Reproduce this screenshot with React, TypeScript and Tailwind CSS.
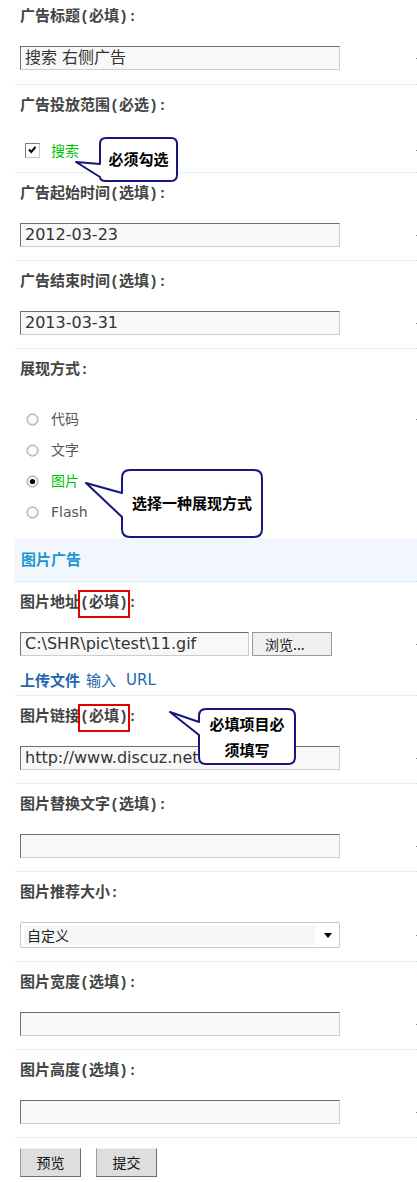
import React from "react";

const LABEL_FONT = "[font-family:'Liberation_Mono','Noto_Sans_CJK_SC',monospace]";
const CJK = "[font-family:'Noto_Sans_CJK_SC',sans-serif]";
const VERD = "[font-family:'DejaVu_Sans','Noto_Sans_CJK_SC',sans-serif]";

function Dot() {
  return <span className="block h-[1px] w-[1px] bg-[#8a8a8a]" />;
}

function Label({ children }: { children: React.ReactNode }) {
  return (
    <div className={`flex h-[20px] items-center text-[15px] font-bold text-[#444] ${LABEL_FONT}`}>{children}</div>
  );
}

function Req({ children }: { children: React.ReactNode }) {
  return (
    <span className="inline-flex h-[24px] items-center outline-2 outline-solid outline-[#e00000]">{children}</span>
  );
}

function TextBox({ value, w = "w-[320px]" }: { value?: string; w?: string }) {
  return (
    <div
      className={`flex h-[24px] ${w} items-center overflow-hidden border border-t-[#6e6e6e] border-l-[#6e6e6e] border-r-[#cdcdcd] border-b-[#cdcdcd] bg-[#f8f8f8] pl-[4px] text-[16px] whitespace-nowrap text-[#333] ${VERD}`}
    >
      {value}
    </div>
  );
}

function Row({
  label,
  children,
  pt = "pt-[12px]",
  pb = "pb-[13px]",
  mt = "mt-[18px]",
}: {
  label: React.ReactNode;
  children: React.ReactNode;
  pt?: string;
  pb?: string;
  mt?: string;
}) {
  return (
    <div className={`border-b border-dotted border-[#c6e3f6] pl-[6px] ${pt} ${pb}`}>
      <Label>{label}</Label>
      <div className={mt}>{children}</div>
    </div>
  );
}

function Radio({ checked }: { checked?: boolean }) {
  return (
    <svg width="13" height="13" viewBox="0 0 13 13">
      <circle cx="6.5" cy="6.5" r="5.5" fill="#fbfbfb" stroke="#8e8e8e" />
      <circle cx="6.5" cy="6.5" r="4.5" fill="none" stroke="#e2e2e2" />
      {checked && <circle cx="6.5" cy="6.5" r="2.6" fill="#000" />}
    </svg>
  );
}

function RadioRow({ label, checked, green, dot }: { label: string; checked?: boolean; green?: boolean; dot?: boolean }) {
  return (
    <div className="flex h-[31px] items-center justify-between">
      <div className="flex items-center">
        <span className="ml-[6px] flex">
          <Radio checked={checked} />
        </span>
        <span className={`ml-[12px] text-[14px] ${green ? "text-[#00c400]" : "text-[#555]"} ${VERD}`}>{label}</span>
      </div>
      {dot && <Dot />}
    </div>
  );
}

export default function App() {
  return (
    <div className="relative w-[417px] bg-white pl-[14px]">
      {/* Row 1 */}
      <Row label={<>广告标题(必填):</>} pt="pt-[8px]" pb="pb-[14px]">
        <div className="flex items-center justify-between">
          <TextBox value="搜索 右侧广告" />
          <Dot />
        </div>
      </Row>

      {/* Row 2 */}
      <Row label={<>广告投放范围(必选):</>} mt="mt-[21px]" pb="pb-[10px]">
        <div className="flex h-[24px] items-center justify-between">
          <div className="flex items-center">
            <svg width="15" height="15" viewBox="0 0 15 15" className="ml-[5px]">
              <rect x="0.5" y="0.5" width="14" height="14" fill="#fff" stroke="#c8c8c8" />
              <path d="M0.5 14.5 V0.5 H14.5" fill="none" stroke="#7a7a7a" />
              <path d="M4 6.5 L6.3 9 L10.5 3.8" fill="none" stroke="#000" strokeWidth="2" />
            </svg>
            <span className={`ml-[11px] text-[14px] text-[#00c400] ${CJK}`}>搜索</span>
          </div>
          <Dot />
        </div>
      </Row>

      {/* Row 3 */}
      <Row label={<>广告起始时间(选填):</>}>
        <div className="flex items-center justify-between">
          <TextBox value="2012-03-23" />
          <Dot />
        </div>
      </Row>

      {/* Row 4 */}
      <Row label={<>广告结束时间(选填):</>}>
        <div className="flex items-center justify-between">
          <TextBox value="2013-03-31" />
          <Dot />
        </div>
      </Row>

      {/* Row 5 */}
      <div className="pl-[6px] pt-[12px] pb-[10px]">
        <Label>展现方式:</Label>
        <div className="mt-[23px]">
          <RadioRow label="代码" dot />
          <RadioRow label="文字" />
          <RadioRow label="图片" checked green />
          <RadioRow label="Flash" />
        </div>
      </div>

      {/* Section header */}
      <div className="flex h-[44px] items-center border-b border-dotted border-[#c6e3f6] bg-[#f1f7fc] pl-[7px]">
        <span className={`text-[15px] font-bold text-[#1c97d2] ${CJK}`}>图片广告</span>
      </div>

      {/* Row 6 */}
      <Row
        label={
          <>
            图片地址<Req>(必填)</Req>:
          </>
        }
        pb="pb-[5px]"
      >
        <div className="flex items-center justify-between">
          <div className="flex items-center gap-[3px]">
            <TextBox value="C:\SHR\pic\test\11.gif" w="w-[229px]" />
            <div
              className={`flex h-[24px] w-[80px] items-center border border-[#9a9a9a] bg-[#f0f0f0] pl-[12px] text-[14px] text-[#222] ${CJK}`}
            >
              浏览...
            </div>
          </div>
          <Dot />
        </div>
        <div className="mt-[14px] flex h-[20px] items-center text-[15px] text-[#2466ad]">
          <span className={`font-bold ${CJK}`}>上传文件</span>
          <span className={`ml-[6px] ${CJK}`}>输入</span>
          <span className={`ml-[10px] ${VERD}`}>URL</span>
        </div>
      </Row>

      {/* Row 7 */}
      <Row
        label={
          <>
            图片链接<Req>(必填)</Req>:
          </>
        }
      >
        <div className="flex items-center justify-between">
          <TextBox value="http://www.discuz.net" />
          <Dot />
        </div>
      </Row>

      {/* Row 8 */}
      <Row label={<>图片替换文字(选填):</>}>
        <div className="flex items-center justify-between">
          <TextBox />
          <Dot />
        </div>
      </Row>

      {/* Row 9 */}
      <Row label={<>图片推荐大小:</>}>
        <div className="flex items-center justify-between">
          <div className="flex h-[26px] w-[320px] items-center rounded-[2px] border border-[#c4c9cf] bg-white pl-[3px] pr-[7px]">
            <div className={`flex h-[19px] w-[291px] items-center bg-[#f6f6f6] pl-[3px] text-[14px] text-[#222] ${CJK}`}>
              自定义
            </div>
            <svg width="8" height="5" viewBox="0 0 8 5" className="ml-auto">
              <path d="M0 0 H8 L4 5 Z" fill="#000" />
            </svg>
          </div>
          <Dot />
        </div>
      </Row>

      {/* Row 10 */}
      <Row label={<>图片宽度(选填):</>}>
        <div className="flex items-center justify-between">
          <TextBox />
          <Dot />
        </div>
      </Row>

      {/* Row 11 */}
      <Row label={<>图片高度(选填):</>}>
        <div className="flex items-center justify-between">
          <TextBox />
          <Dot />
        </div>
      </Row>

      {/* Buttons */}
      <div className="flex gap-[15px] pl-[6px] pt-[10px] pb-[5px]">
        {["预览", "提交"].map((t) => (
          <div
            key={t}
            className={`flex h-[29px] w-[61px] items-center justify-center border border-t-[#efefef] border-l-[#9a9a9a] border-r-[#6a6a6a] border-b-[#6a6a6a] bg-[#dedede] text-[14px] text-[#111] ${CJK}`}
          >
            {t}
          </div>
        ))}
      </div>

      {/* Callout 1 */}
      <div className="absolute left-[75px] top-[136px] h-[48px] w-[106px]">
        <svg width="106" height="48" viewBox="0 0 106 48" className="absolute left-0 top-0">
          <path
            d="M1,26 L25,28 L25,8 Q25,2 31,2 L96,2 Q102,2 102,8 L102,39 Q102,45 96,45 L31,45 Q25,45 25,41 Z"
            fill="#fff"
            stroke="#16167c"
            strokeWidth="2"
            strokeLinejoin="round"
          />
        </svg>
        <div
          className={`absolute left-[25px] top-[2px] flex h-[43px] w-[77px] items-center justify-center text-[15px] font-bold text-black ${CJK}`}
        >
          必须勾选
        </div>
      </div>

      {/* Callout 2 */}
      <div className="absolute left-[84px] top-[468px] h-[72px] w-[181px]">
        <svg width="181" height="72" viewBox="0 0 181 72" className="absolute left-0 top-0">
          <path
            d="M2,15 L38,25 L38,10 Q38,2 46,2 L170,2 Q178,2 178,10 L178,61 Q178,69 170,69 L46,69 Q38,69 38,61 L38,49 Z"
            fill="#fff"
            stroke="#16167c"
            strokeWidth="2"
            strokeLinejoin="round"
          />
        </svg>
        <div
          className={`absolute left-[38px] top-[2px] flex h-[67px] w-[140px] items-center justify-center text-[15px] font-bold text-black ${CJK}`}
        >
          选择一种展现方式
        </div>
      </div>

      {/* Callout 3 */}
      <div className="absolute left-[168px] top-[707px] h-[60px] w-[130px]">
        <svg width="130" height="60" viewBox="0 0 130 60" className="absolute left-0 top-0">
          <path
            d="M2,5 L31,15 L31,9 Q31,2 38,2 L120,2 Q127,2 127,9 L127,50 Q127,57 120,57 L38,57 Q31,57 31,50 L31,28 Z"
            fill="#fff"
            stroke="#16167c"
            strokeWidth="2"
            strokeLinejoin="round"
          />
        </svg>
        <div
          className={`absolute left-[31px] top-[2px] flex h-[55px] w-[96px] flex-col items-center justify-center text-[15px] leading-[26px] font-bold text-black ${CJK}`}
        >
          <span>必填项目必</span>
          <span>须填写</span>
        </div>
      </div>
    </div>
  );
}
